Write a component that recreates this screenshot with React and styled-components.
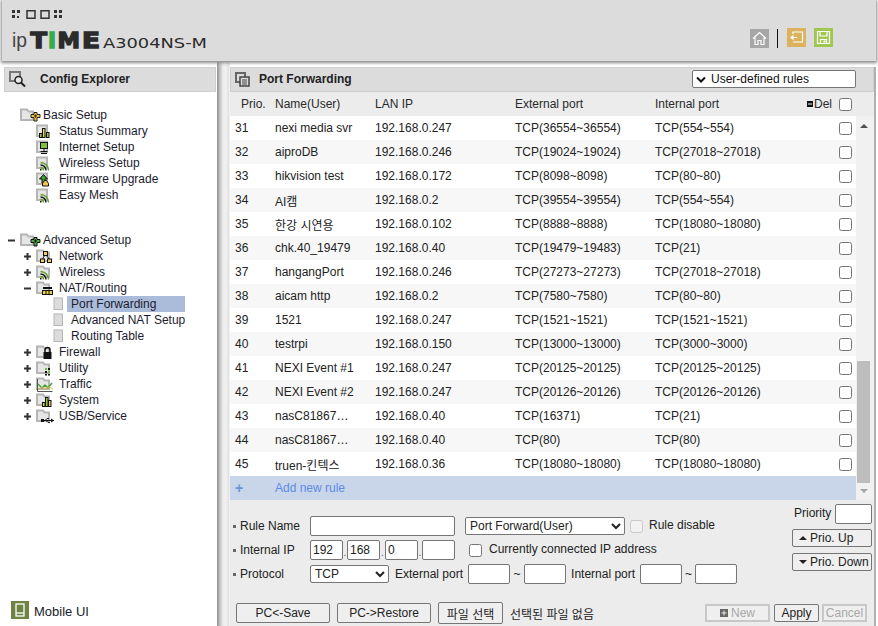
import React from 'react';
import styled, { createGlobalStyle } from 'styled-components';

const Global = createGlobalStyle`
  html, body { margin: 0; padding: 0; background: #fff; overflow: hidden; }
  body { font: 12px "Liberation Sans", Arial, "Noto Sans CJK KR", sans-serif; color: #222; }
  * { box-sizing: border-box; }
`;

const Page = styled.div`
  width: 878px; height: 626px; display: flex; flex-direction: column; overflow: hidden; background: #fff;
`;
const Header = styled.header`
  height: 61px; margin: 0 2px; flex: none; background: #dcdcdc; box-shadow: 0 1px 3px 1px #8a8a8a;
  display: flex; justify-content: space-between; align-items: flex-end;
  padding: 0 43px 13px 10px; position: relative; z-index: 1;
`;
const Logo = styled.svg`
  display: block; margin-bottom: -7px;
`;
const HeaderTools = styled.div`
  display: flex; align-items: flex-start; height: 20px;
`;
const ToolIcon = styled.div`
  width: 19px; height: 19px; background: ${p => p.$bg}; display: flex; align-items: center; justify-content: center;
  margin-top: ${p => p.$up ? 0 : 1}px;
  margin-left: ${p => p.$gap}px;
`;
const ToolSep = styled.div`
  width: 1px; height: 19px; margin: 1px 0 0 8px; background: #111;
`;
const Body = styled.div`
  flex: 1; display: flex; min-height: 0;
`;
const Sidebar = styled.aside`
  width: 217px; flex: none; display: flex; flex-direction: column; padding: 6px 0 0 4px;
`;
const Divider = styled.div`
  width: 13px; flex: none; margin-top: 1px;
  background: linear-gradient(90deg, #8f8f8f 0, #c4c4c4 3px, #ececec 6px, #f1f1f1 9px, #e0e0e0 12px, #fff 13px);
`;
const BarTitle = styled.div`
  height: 25px; flex: none; background: #dcdcdc; border: 1px solid #cfcfcf; font-weight: 700; padding-bottom: 1px;
  display: flex; align-items: center; color: #222;
`;
const SideTitle = styled(BarTitle)`
  width: 212px; padding-left: 4px; gap: 14px;
`;
const Tree = styled.nav`
  flex: 1; padding-top: 15px; margin-left: -4px;
`;
const TreeGroup = styled.div`
  margin-bottom: 29px;
`;
const TreeRow = styled.div`
  height: 16px; display: flex; align-items: center; padding-left: ${p => [4, 20, 53][p.$level]}px; color: #1c1c2e; white-space: nowrap;
`;
const Toggle = styled.span`
  width: 14px; height: 16px; flex: none; margin-right: 2px; display: flex; align-items: center; justify-content: center;
`;
const NodeLabel = styled.span`
  display: block; height: 16px; line-height: 16px;
  ${p => p.$leaf ? 'width: 118px; padding-left: 4px;' : ''}
  ${p => p.$active ? 'background: #abbcdb;' : ''}
`;
const Mobile = styled.div`
  height: 18px; margin: 0 0 7px 7px; display: flex; align-items: center; gap: 5px; font-size: 13px; color: #1a1a2a;
`;
const MobileLabel = styled.span`
  margin-top: 2px;
`;
const MobileIcon = styled.div`
  width: 18px; height: 18px; background: #6f8442; display: flex; align-items: center; justify-content: center;
`;
const Main = styled.main`
  width: 646px; flex: none; margin-top: 6px; display: flex; flex-direction: column; border-right: 2px solid #b0b0b0;
`;
const MainTitle = styled(BarTitle)`
  padding: 0 17px 1px 4px; justify-content: space-between;
`;
const TitleLeft = styled.div`
  display: flex; align-items: center; gap: 9px;
`;
const RuleFilter = styled.div`
  width: 164px; height: 18px; background: #fff; border: 1px solid #767676; border-radius: 2px; font-weight: 400;
  display: flex; align-items: center; padding-left: 3px; gap: 5px; color: #111;
`;
const Cols = `display: grid; grid-template-columns: 45px 100px 140px 140px 1fr 13px; align-items: center;`;
const HeadRow = styled.div`
  ${Cols} height: 24px; flex: none; background: #ececec; padding-right: 22px; color: #2a2a2a;
`;
const HeadPrio = styled.span`
  padding-left: 11px;
`;
const HeadLast = styled.div`
  display: flex; align-items: center; justify-content: space-between; padding-right: 7px; white-space: nowrap;
`;
const DelLabel = styled.span`
  display: flex; align-items: center; gap: 1px;
`;
const Check = styled.input.attrs({ type: 'checkbox' })`
  width: 13px; height: 13px; margin: 0; display: block;
`;
const ListWrap = styled.div`
  flex: none; height: 384px; display: flex;
`;
const List = styled.div`
  flex: 1; display: flex; flex-direction: column;
`;
const Row = styled.div`
  ${Cols} height: 24px; flex: none; padding-right: 4px; background: ${p => p.$alt ? '#f7f7f7' : '#fff'}; color: #222; white-space: nowrap;
`;
const RowNum = styled.span`
  padding-left: 5px;
`;
const AddRow = styled.div`
  height: 24px; flex: none; background: #c9d5e8; display: flex; align-items: center; color: #5b8be8;
`;
const AddPlus = styled.span`
  width: 45px; padding-left: 5px; font-weight: 700; font-size: 14px; color: #6a93d6;
`;
const Scroll = styled.div`
  width: 18px; flex: none; background: #f1f1f1; display: flex; flex-direction: column; padding: 8px 0 0 4px;
`;
const Arrow = styled.div`
  width: 0; height: 0; border-left: 4px solid transparent; border-right: 4px solid transparent; flex: none;
  ${p => p.$down ? 'border-top: 4px solid #a3a3a3;' : 'border-bottom: 4px solid #505050;'}
`;
const Thumb = styled.div`
  width: 13px; height: 122px; flex: none; margin: 233px 0 6px -3px; background: #bdbdbd;
`;
const Form = styled.div`
  flex: 1; background: #ececec; display: flex; flex-direction: column; min-height: 0; color: #222;
`;
const FormTop = styled.div`
  height: 101px; flex: none; display: flex;
`;
const FormLeft = styled.div`
  width: 562px; flex: none; padding-top: 14px;
`;
const FormRow = styled.div`
  height: 24px; display: flex; align-items: center; white-space: nowrap;
`;
const Label = styled.label`
  width: 80px; flex: none; display: flex; align-items: center; padding-left: 3px; gap: 4px;
  &::before { content: ''; width: 3px; height: 3px; background: #666; display: block; }
`;
const Text = styled.input`
  height: ${p => p.$h || 20}px; width: ${p => p.$w}px; flex: none; margin: 0 0 0 ${p => p.$ml || 0}px; padding: 0 2px;
  border: 1px solid #767676; border-radius: 2px; background: #fff; font: inherit; color: #222; outline: 0;
`;
const Select = styled.select`
  height: 18px; width: ${p => p.$w}px; flex: none; margin-left: ${p => p.$ml || 0}px; padding: 0;
  border: 1px solid #767676; border-radius: 2px; background: #fff; font: inherit; color: #222;
`;
const Dot = styled.span`
  width: ${p => p.$w || 4}px; flex: none; text-align: center; align-self: flex-end; line-height: 18px; color: #555; font-size: 10px;
`;
const Plain = styled.span`
  margin-left: ${p => p.$ml || 0}px; flex: none; ${p => p.$w ? `width: ${p.$w}px; text-align: center;` : ''} ${p => p.$lift ? 'margin-top: -2px;' : ''}
`;
const RowCheck = styled(Check)`
  margin-left: ${p => p.$ml}px; flex: none;
`;
const FormRight = styled.div`
  flex: 1; padding: 4px 0 0 0; display: flex; flex-direction: column; align-items: flex-start;
`;
const PrioRow = styled.div`
  display: flex; align-items: center; height: 20px; padding-left: 2px; gap: 4px;
`;
const PrioText = styled.span`
  margin-top: -2px;
`;
const Btn = styled.button`
  height: ${p => p.$h || 20}px; width: ${p => p.$w}px; flex: none; margin: 0 0 0 ${p => p.$ml || 0}px; padding: 0;
  border: 1px solid #767676; border-radius: 2px; background: #efefef; font: inherit; color: #222;
  display: flex; align-items: center; justify-content: center; gap: 3px; white-space: nowrap;
  ${p => p.$off ? 'border: 2px solid #c8c8c8; color: #a8a8a8; border-radius: 0;' : ''}
`;
const PrioBtn = styled(Btn)`
  margin-top: ${p => p.$mt}px; justify-content: flex-start; padding-left: 6px;
`;
const NewBtn = styled(Btn)`
  margin-left: auto;
`;
const Tri = styled.span`
  width: 0; height: 0; border-left: 4px solid transparent; border-right: 4px solid transparent;
  ${p => p.$down ? 'border-top: 4px solid #222;' : 'border-bottom: 4px solid #222;'}
`;
const FormBottom = styled.div`
  height: 24px; flex: none; display: flex; align-items: center; padding: 0 7px 0 6px;
`;

const folder = <path d="M1 2.5h6l1.5 2H13V13H1z" fill="#e6e6e6" stroke="#b5b5b5" strokeWidth="2" />;
const box = <rect x="1" y="2.5" width="10" height="10.5" fill="#e6e6e6" stroke="#b5b5b5" strokeWidth="2" />;

const Wifi = (
  <g fill="none" strokeWidth="1.400">
    <path d="M4.500 7.500a8 8 0 0 1 8 8" stroke="#5f9e2a" />
    <path d="M4.500 10a5.500 5.500 0 0 1 5.500 5.500" stroke="#111" />
    <path d="M4.500 12.500a3 3 0 0 1 3 3" stroke="#5f9e2a" />
    <rect x="4" y="14" width="1.500" height="1.500" fill="#111" stroke="none" />
  </g>
);

const overlays = {
  plusY: <g><path d="M11 7.500h3v-2h3v2h3v3h-3v3.500h-3v-3.500h-3z" fill="#f6c445" stroke="#222" /><path d="M14 9h3M15.500 7.500v3" stroke="#222" /></g>,
  plusG: <g><path d="M11 7.500h3v-2h3v2h3v3h-3v3.500h-3v-3.500h-3z" fill="#4fae4b" stroke="#111" /><path d="M14 9h3M15.500 7.500v3" stroke="#111" /></g>,
  bars: <g fill="#9ccc3c" stroke="#111"><rect x="3.500" y="10.500" width="2.500" height="4" /><rect x="6.500" y="5.500" width="2.500" height="9" fill="#e8d24a" /><rect x="10.500" y="9.500" width="2.500" height="5" /></g>,
  barsY: <g stroke="#111"><rect x="6.500" y="10.500" width="2.500" height="4" fill="#e8d24a" /><rect x="9.500" y="5.500" width="2.500" height="9" fill="#9ccc3c" /><rect x="12.500" y="8.500" width="2.500" height="6" fill="#e8d24a" /></g>,
  monitor: <g><rect x="4.500" y="3.500" width="7" height="6" fill="#7fbf3f" stroke="#111" /><path d="M8 10v2M4.500 12.500h7M5 14.500h6" stroke="#111" /></g>,
  wifi: Wifi,
  up: <g><path d="M7.500 3.500l4 4.500H9v4.500H6V8H3.500z" fill="#3c9a2e" stroke="#111" /><path d="M8.500 9.500h2l2 3v2.500h-6v-2.500z" fill="#f3c84a" stroke="#111" /></g>,
  network: <g fill="#f0ce6a" stroke="#111"><rect x="7.500" y="3.500" width="4" height="4" /><rect x="4.500" y="11" width="4" height="3.500" /><rect x="11.500" y="11" width="4" height="3.500" /><path d="M8.500 7.500L6.500 11M10.500 7.500l2.500 3.500" fill="none" /></g>,
  nat: <g><rect x="7" y="7" width="9" height="2" fill="#111" /><rect x="6.500" y="10.500" width="10" height="4" fill="#e8d24a" stroke="#111" /><path d="M10 10.500v4M13 10.500v4" stroke="#111" /></g>,
  lock: <g><path d="M9 8V6a2.500 2.500 0 0 1 5 0v2" fill="none" stroke="#111" strokeWidth="1.500" /><rect x="7.500" y="8" width="8" height="7" fill="#111" /></g>,
  utility: <g fill="#111"><rect x="9" y="8" width="2" height="2" fill="#6bbb3b" /><rect x="12" y="8" width="2" height="2" /><rect x="9" y="11" width="2" height="2" /><rect x="12" y="11" width="2" height="2" fill="#6bbb3b" /><rect x="9" y="14" width="2" height="1.500" /><rect x="12" y="14" width="2" height="1.500" /></g>,
  traffic: <g fill="none"><path d="M1.500 3v12.500h15" stroke="#555" /><path d="M2 8l4 4 3-3 3 3 4-5" stroke="#45a53a" strokeWidth="1.500" /><path d="M2 14l4-3 3 2 4-2 4 2" stroke="#e3b63f" /></g>,
  usb: <g fill="#111"><path d="M5 12.500h13" stroke="#111" /><rect x="5" y="11" width="3" height="3" /><path d="M18 12.500l-3-2v4z" /><path d="M9 12.500l2-2h2M10 12.500l2 2h2" stroke="#111" fill="none" /></g>
};

function TreeIcon({ kind, isFolder }) {
  return (
    <svg width="23" height="16" viewBox="0 0 23 16" style={{ flex: 'none' }}>
      {isFolder ? folder : box}
      {overlays[kind]}
    </svg>
  );
}

const ToggleGlyph = ({ open }) => (
  <svg width="7" height="7" viewBox="0 0 7 7">
    <path d={open ? 'M0 3.500h7' : 'M0 3.500h7M3.500 0v7'} stroke="#333" strokeWidth="2" />
  </svg>
);

const Node = ({ level, label, kind, toggle, isFolder }) => (
  <TreeRow $level={level}>
    <Toggle>{toggle && <ToggleGlyph open={toggle === 'open'} />}</Toggle>
    <TreeIcon kind={kind} isFolder={isFolder} />
    <NodeLabel>{label}</NodeLabel>
  </TreeRow>
);

const Leaf = ({ label, active }) => (
  <TreeRow $level={2}>
    <svg width="14" height="16" viewBox="0 0 14 16" style={{ flex: 'none' }}>
      <rect x="1" y="2" width="8.500" height="11.500" fill="#dcdcdc" stroke="#b5b5b5" />
    </svg>
    <NodeLabel $leaf $active={active}>{label}</NodeLabel>
  </TreeRow>
);

const rows = [
  [31, 'nexi media svr', '192.168.0.247', 'TCP(36554~36554)', 'TCP(554~554)'],
  [32, 'aiproDB', '192.168.0.246', 'TCP(19024~19024)', 'TCP(27018~27018)'],
  [33, 'hikvision test', '192.168.0.172', 'TCP(8098~8098)', 'TCP(80~80)'],
  [34, 'AI캠', '192.168.0.2', 'TCP(39554~39554)', 'TCP(554~554)'],
  [35, '한강 시연용', '192.168.0.102', 'TCP(8888~8888)', 'TCP(18080~18080)'],
  [36, 'chk.40_19479', '192.168.0.40', 'TCP(19479~19483)', 'TCP(21)'],
  [37, 'hangangPort', '192.168.0.246', 'TCP(27273~27273)', 'TCP(27018~27018)'],
  [38, 'aicam http', '192.168.0.2', 'TCP(7580~7580)', 'TCP(80~80)'],
  [39, '1521', '192.168.0.247', 'TCP(1521~1521)', 'TCP(1521~1521)'],
  [40, 'testrpi', '192.168.0.150', 'TCP(13000~13000)', 'TCP(3000~3000)'],
  [41, 'NEXI Event #1', '192.168.0.247', 'TCP(20125~20125)', 'TCP(20125~20125)'],
  [42, 'NEXI Event #2', '192.168.0.247', 'TCP(20126~20126)', 'TCP(20126~20126)'],
  [43, 'nasC81867…', '192.168.0.40', 'TCP(16371)', 'TCP(21)'],
  [44, 'nasC81867…', '192.168.0.40', 'TCP(80)', 'TCP(80)'],
  [45, 'truen-킨텍스', '192.168.0.36', 'TCP(18080~18080)', 'TCP(18080~18080)']
];

const LogoMark = () => (
  <Logo width="200" height="50" viewBox="0 0 200 50">
    <g fill="#333">
      <rect x="0" y="5" width="3" height="3" /><rect x="5" y="5" width="3" height="3" />
      <rect x="0" y="10" width="3" height="3" /><rect x="5" y="11" width="2" height="2" />
      <rect x="15" y="5.750" width="8" height="7.500" fill="none" stroke="#333" strokeWidth="1.500" />
      <rect x="29" y="5.750" width="8" height="7.500" fill="none" stroke="#333" strokeWidth="1.500" />
      <rect x="42" y="5" width="3" height="3" /><rect x="47" y="5" width="3" height="3" />
      <rect x="42" y="10" width="3" height="3" /><rect x="47" y="10" width="3" height="3" />
    </g>
    <text x="0" y="42" fontFamily="Liberation Sans" fontSize="20" fill="#444" textLength="15" lengthAdjust="spacingAndGlyphs">ip</text>
    <g fontFamily="DejaVu Sans" fontWeight="700" fontSize="22" stroke="#2b2b2b" strokeWidth="1.400" fill="#2b2b2b">
      <text x="18.500" y="43" textLength="16.500" lengthAdjust="spacingAndGlyphs">T</text>
      <text x="36" y="43" textLength="8" lengthAdjust="spacingAndGlyphs" fill="#35ab4a" stroke="#35ab4a">I</text>
      <text x="45.500" y="43" textLength="22.500" lengthAdjust="spacingAndGlyphs">M</text>
      <text x="70" y="43" textLength="18" lengthAdjust="spacingAndGlyphs">E</text>
    </g>
    <text x="91" y="43" fontFamily="DejaVu Sans" fontSize="14" fill="#2b2b2b" textLength="104" lengthAdjust="spacingAndGlyphs">A3004NS-M</text>
  </Logo>
);

export default function App() {
  return (
    <Page>
      <Global />
      <Header>
        <LogoMark />
        <HeaderTools>
          <ToolIcon $bg="#a6a6a6" $gap={0}>
            <svg width="15" height="15" viewBox="0 0 15 15" fill="none" stroke="#fff" strokeWidth="1.200">
              <path d="M1 7.500L7.500 1.500 14 7.500M3 6.500V13.500H6V9.500H9V13.500H12V6.500" />
            </svg>
          </ToolIcon>
          <ToolSep />
          <ToolIcon $bg="#dcb25f" $gap={9} $up>
            <svg width="15" height="15" viewBox="0 0 15 15" fill="none" stroke="#fff" strokeWidth="1.200">
              <path d="M4 4V2H13.500V12H4M8 7.500H2.500M4.500 5.500L2 7.500L4.500 9.500" />
            </svg>
          </ToolIcon>
          <ToolIcon $bg="#a0c850" $gap={8} $up>
            <svg width="15" height="15" viewBox="0 0 15 15" fill="none" stroke="#fff" strokeWidth="1.200">
              <path d="M1.500 1.500H13.500V13.500H1.500zM4 1.500V6H11V1.500M4.500 13.500V9.500H10.500V13.500" />
              <rect x="7.500" y="10.500" width="2" height="2" fill="#fff" stroke="none" />
            </svg>
          </ToolIcon>
        </HeaderTools>
      </Header>
      <Body>
        <Sidebar>
          <SideTitle>
            <svg width="17" height="17" viewBox="0 0 17 17" fill="none">
              <rect x="1" y="1" width="10" height="9" stroke="#777" strokeWidth="2" fill="#dcdcdc" />
              <circle cx="9.500" cy="9" r="3.500" stroke="#222" strokeWidth="1.500" fill="#e8e8e8" />
              <path d="M12 11.500L16 15.500" stroke="#222" strokeWidth="2" />
            </svg>
            Config Explorer
          </SideTitle>
          <Tree>
            <TreeGroup>
              <Node level={0} label="Basic Setup" kind="plusY" isFolder />
              <Node level={1} label="Status Summary" kind="bars" />
              <Node level={1} label="Internet Setup" kind="monitor" />
              <Node level={1} label="Wireless Setup" kind="wifi" />
              <Node level={1} label="Firmware Upgrade" kind="up" />
              <Node level={1} label="Easy Mesh" kind="wifi" />
            </TreeGroup>
            <TreeGroup>
              <Node level={0} label="Advanced Setup" kind="plusG" isFolder toggle="open" />
              <Node level={1} label="Network" kind="network" isFolder toggle="closed" />
              <Node level={1} label="Wireless" kind="wifi" isFolder toggle="closed" />
              <Node level={1} label="NAT/Routing" kind="nat" isFolder toggle="open" />
              <Leaf label="Port Forwarding" active />
              <Leaf label="Advanced NAT Setup" />
              <Leaf label="Routing Table" />
              <Node level={1} label="Firewall" kind="lock" isFolder toggle="closed" />
              <Node level={1} label="Utility" kind="utility" isFolder toggle="closed" />
              <Node level={1} label="Traffic" kind="traffic" isFolder toggle="closed" />
              <Node level={1} label="System" kind="barsY" isFolder toggle="closed" />
              <Node level={1} label="USB/Service" kind="usb" isFolder toggle="closed" />
            </TreeGroup>
          </Tree>
          <Mobile>
            <MobileIcon>
              <svg width="10" height="14" viewBox="0 0 10 14" fill="none" stroke="#fff" strokeWidth="1.300">
                <rect x="1" y="1" width="8" height="12" />
                <path d="M1 10h8" />
              </svg>
            </MobileIcon>
            <MobileLabel>Mobile UI</MobileLabel>
          </Mobile>
        </Sidebar>
        <Divider />
        <Main>
          <MainTitle>
            <TitleLeft>
              <svg width="15" height="15" viewBox="0 0 15 15" fill="none" stroke="#444" strokeWidth="1.500">
                <rect x="1" y="1" width="9" height="9" strokeWidth="2" stroke="#666" />
                <rect x="5" y="5" width="9" height="9" fill="#dcdcdc" />
                <path d="M7 8h5M7 10h5M7 12h5" strokeWidth="1" />
              </svg>
              Port Forwarding
            </TitleLeft>
            <RuleFilter>
              <svg width="10" height="7" viewBox="0 0 10 7" fill="none"><path d="M1 1.500l4 4 4-4" stroke="#111" strokeWidth="2" /></svg>
              <span>User-defined rules</span>
            </RuleFilter>
          </MainTitle>
          <HeadRow>
            <HeadPrio>Prio.</HeadPrio>
            <span>Name(User)</span>
            <span>LAN IP</span>
            <span>External port</span>
            <HeadLast>
              <span>Internal port</span>
              <DelLabel>
                <svg width="6" height="6" viewBox="0 0 6 6"><path d="M0 0h6v6H0z" fill="#111" /><path d="M1 3h4" stroke="#fff" /></svg>
                Del
              </DelLabel>
            </HeadLast>
            <Check />
          </HeadRow>
          <ListWrap>
            <List>
              {rows.map((r, i) => (
                <Row key={r[0]} $alt={i % 2 === 1}>
                  <RowNum>{r[0]}</RowNum>
                  <span>{r[1]}</span>
                  <span>{r[2]}</span>
                  <span>{r[3]}</span>
                  <span>{r[4]}</span>
                  <Check />
                </Row>
              ))}
              <AddRow><AddPlus>+</AddPlus>Add new rule</AddRow>
            </List>
            <Scroll>
              <Arrow />
              <Thumb />
              <Arrow $down />
            </Scroll>
          </ListWrap>
          <Form>
            <FormTop>
              <FormLeft>
                <FormRow>
                  <Label>Rule Name</Label>
                  <Text $w={145} />
                  <Select $w={160} $ml={10} defaultValue="u"><option value="u">Port Forward(User)</option></Select>
                  <RowCheck $ml={5} disabled />
                  <Plain $ml={6} $lift>Rule disable</Plain>
                </FormRow>
                <FormRow>
                  <Label>Internal IP</Label>
                  <Text $w={33} defaultValue="192" />
                  <Dot>.</Dot>
                  <Text $w={33} defaultValue="168" />
                  <Dot $w={5}>.</Dot>
                  <Text $w={33} defaultValue="0" />
                  <Dot>.</Dot>
                  <Text $w={33} />
                  <RowCheck $ml={14} />
                  <Plain $ml={7} $lift>Currently connected IP address</Plain>
                </FormRow>
                <FormRow>
                  <Label>Protocol</Label>
                  <Select $w={79} defaultValue="t"><option value="t">TCP</option></Select>
                  <Plain $ml={6}>External port</Plain>
                  <Text $w={42} $ml={5} />
                  <Plain $w={14}>~</Plain>
                  <Text $w={42} />
                  <Plain $ml={5}>Internal port</Plain>
                  <Text $w={42} $ml={5} />
                  <Plain $w={13}>~</Plain>
                  <Text $w={42} />
                </FormRow>
              </FormLeft>
              <FormRight>
                <PrioRow>
                  <PrioText>Priority</PrioText>
                  <Text $w={37} />
                </PrioRow>
                <PrioBtn $w={80} $h={18} $mt={5}><Tri />Prio. Up</PrioBtn>
                <PrioBtn $w={80} $h={18} $mt={6}><Tri $down />Prio. Down</PrioBtn>
              </FormRight>
            </FormTop>
            <FormBottom>
              <Btn $w={94}>PC&lt;-Save</Btn>
              <Btn $w={94} $ml={7}>PC-&gt;Restore</Btn>
              <Btn $w={65} $h={22} $ml={7}>파일 선택</Btn>
              <Plain $ml={7}>선택된 파일 없음</Plain>
              <NewBtn $w={65} $h={18} $off>
                <svg width="8" height="8" viewBox="0 0 8 8"><path d="M0 0h8v8H0z" fill="#666" /><path d="M4 1.500v5M1.500 4h5" stroke="#ececec" /></svg>
                New
              </NewBtn>
              <Btn $w={45} $h={18} $ml={4}>Apply</Btn>
              <Btn $w={45} $h={18} $ml={3} $off>Cancel</Btn>
            </FormBottom>
          </Form>
        </Main>
      </Body>
    </Page>
  );
}
